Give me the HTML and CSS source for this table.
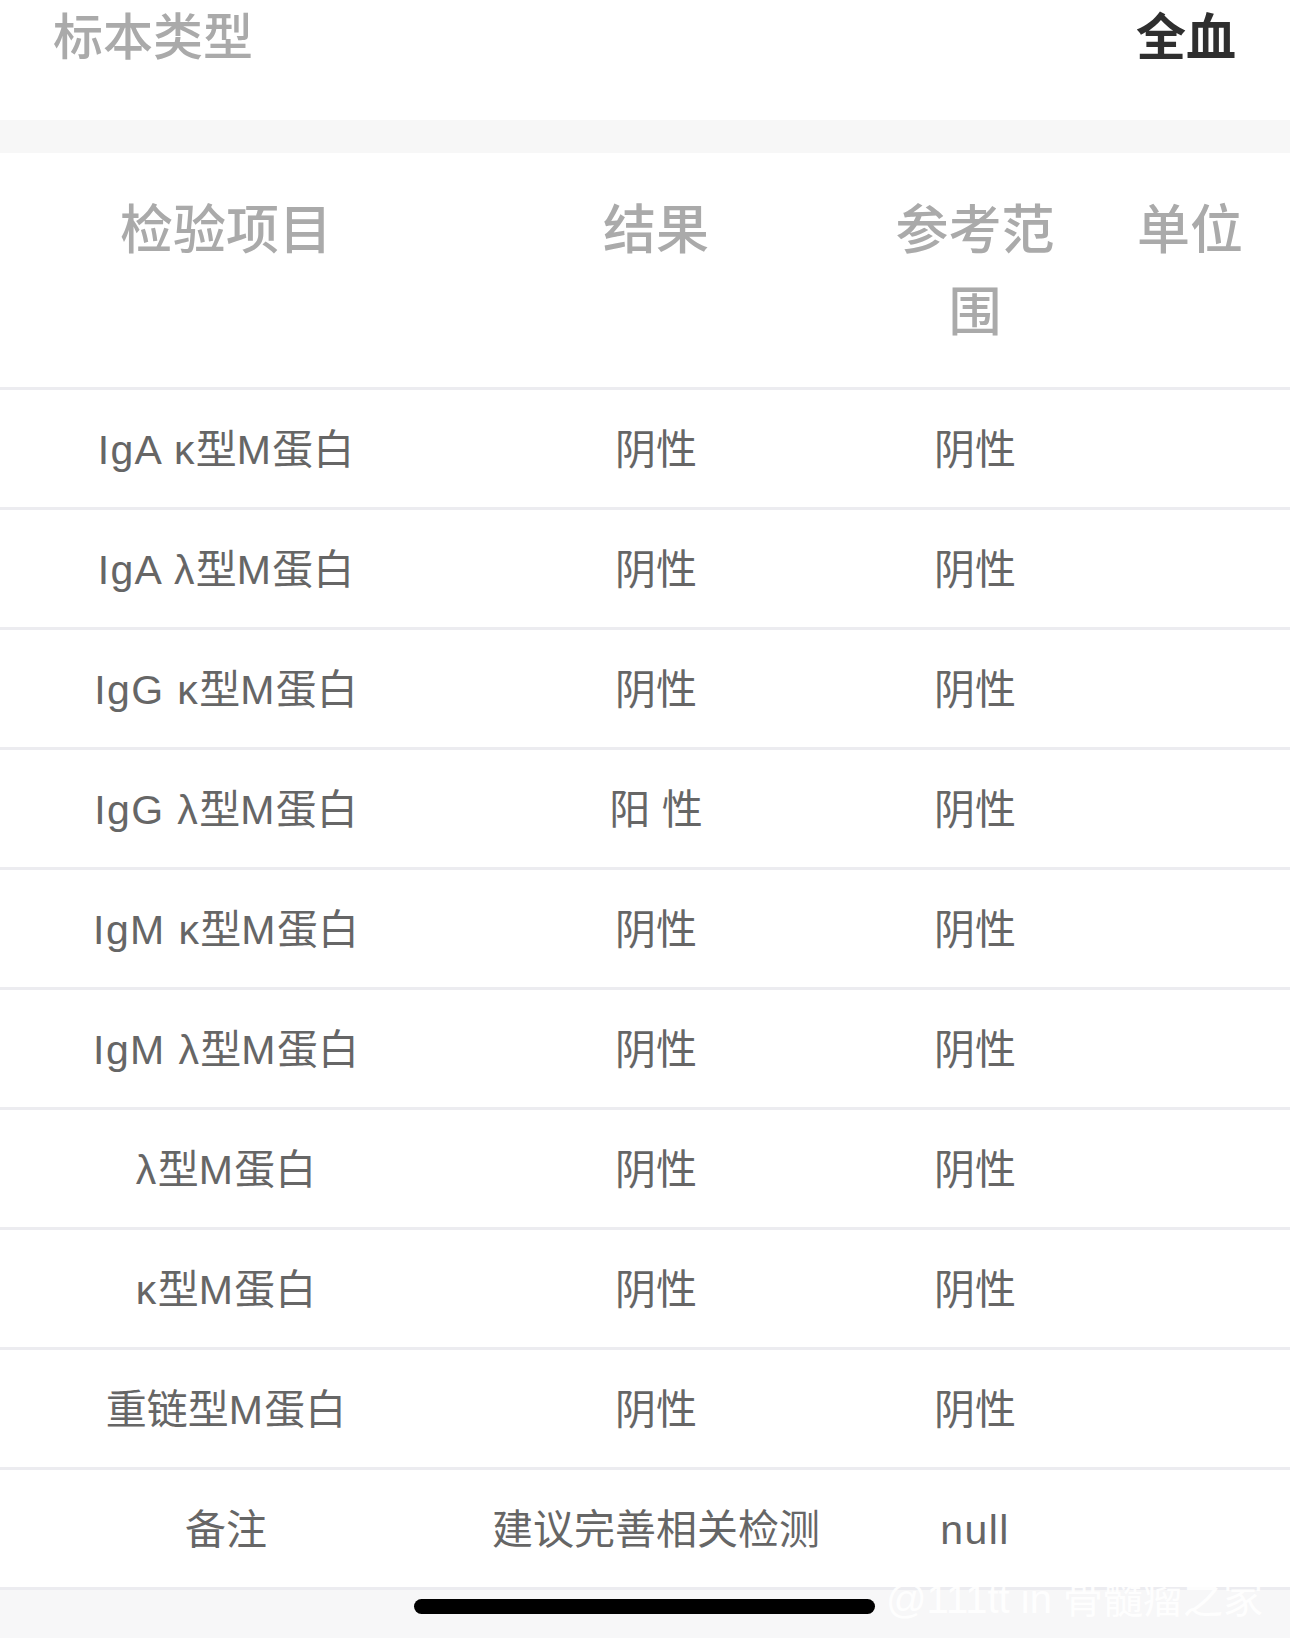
FILE: index.html
```html
<!DOCTYPE html>
<html lang="zh-CN">
<head>
<meta charset="utf-8">
<title>检验结果</title>
<link rel="stylesheet" href="styles.css">
</head>
<body>
<div class="page">
  <div class="info-row">
    <span class="info-label">标本类型</span>
    <span class="info-value">全血</span>
  </div>
  <div class="spacer"></div>
  <div class="table">
    <div class="row head">
      <div class="cell">检验项目</div>
      <div class="cell">结果</div>
      <div class="cell">参考范围</div>
      <div class="cell">单位</div>
    </div>
    <div class="row"><div class="cell"><span class="lat">IgA κ</span>型<span class="lat">M</span>蛋白</div><div class="cell">阴性</div><div class="cell">阴性</div><div class="cell"></div></div>
    <div class="row"><div class="cell"><span class="lat">IgA λ</span>型<span class="lat">M</span>蛋白</div><div class="cell">阴性</div><div class="cell">阴性</div><div class="cell"></div></div>
    <div class="row"><div class="cell"><span class="lat">IgG κ</span>型<span class="lat">M</span>蛋白</div><div class="cell">阴性</div><div class="cell">阴性</div><div class="cell"></div></div>
    <div class="row"><div class="cell"><span class="lat">IgG λ</span>型<span class="lat">M</span>蛋白</div><div class="cell">阳 性</div><div class="cell">阴性</div><div class="cell"></div></div>
    <div class="row"><div class="cell"><span class="lat">IgM κ</span>型<span class="lat">M</span>蛋白</div><div class="cell">阴性</div><div class="cell">阴性</div><div class="cell"></div></div>
    <div class="row"><div class="cell"><span class="lat">IgM λ</span>型<span class="lat">M</span>蛋白</div><div class="cell">阴性</div><div class="cell">阴性</div><div class="cell"></div></div>
    <div class="row"><div class="cell"><span class="lat">λ</span>型<span class="lat">M</span>蛋白</div><div class="cell">阴性</div><div class="cell">阴性</div><div class="cell"></div></div>
    <div class="row"><div class="cell"><span class="lat">κ</span>型<span class="lat">M</span>蛋白</div><div class="cell">阴性</div><div class="cell">阴性</div><div class="cell"></div></div>
    <div class="row"><div class="cell">重链型<span class="lat">M</span>蛋白</div><div class="cell">阴性</div><div class="cell">阴性</div><div class="cell"></div></div>
    <div class="row"><div class="cell">备注</div><div class="cell">建议完善相关检测</div><div class="cell"><span class="lat">null</span></div><div class="cell"></div></div>
  </div>
  <div class="footer">
    <div class="home-bar"></div>
    <div class="watermark">@111tt in 骨髓瘤之家</div>
  </div>
</div>
</body>
</html>
```
FILE: styles.css
```css
* { box-sizing: border-box; }
html, body { margin: 0; padding: 0; background: #ffffff; }
body {
  font-family: "Liberation Sans", "Noto Sans CJK SC", sans-serif;
  width: 1290px;
}
.page { width: 1290px; }

.info-row {
  height: 120px;
  display: flex;
  justify-content: space-between;
  align-items: flex-start;
  padding: 5px 54px 0 53px;
  font-family: "Noto Sans CJK SC", sans-serif;
  font-size: 50px;
  line-height: 56px;
}
.info-label { color: #aaaaaa; font-weight: 500; }
.info-value { color: #2f2f2f; font-weight: 700; }

.spacer { height: 33px; background: #f7f7f7; }

.row {
  display: grid;
  grid-template-columns: 452px 408px 230px 200px;
  height: 120px;
  border-bottom: 3px solid #ececf0;
  align-items: center;
  color: #666666;
  font-size: 41px;
  line-height: 50px;
}
.row .cell {
  text-align: center;
  padding: 3px 12px 0;
  white-space: nowrap;
}
.lat { letter-spacing: 1.4px; }
.row.head {
  height: 237px;
  align-items: start;
  color: #aaaaaa;
  font-family: "Noto Sans CJK SC", sans-serif;
  font-weight: 500;
  font-size: 53px;
  line-height: 82px;
}
.row.head .cell {
  padding: 32px 24px 0;
  white-space: normal;
}

.footer {
  position: relative;
  height: 48px;
  background: #f7f7f8;
}
.home-bar {
  position: absolute;
  left: 414px;
  top: 9px;
  width: 461px;
  height: 15px;
  border-radius: 8px;
  background: #000000;
}
.watermark {
  position: absolute;
  left: 886px;
  top: -11px;
  font-size: 40px;
  line-height: 40px;
  color: rgba(255, 255, 255, 0.92);
  white-space: nowrap;
}
```
